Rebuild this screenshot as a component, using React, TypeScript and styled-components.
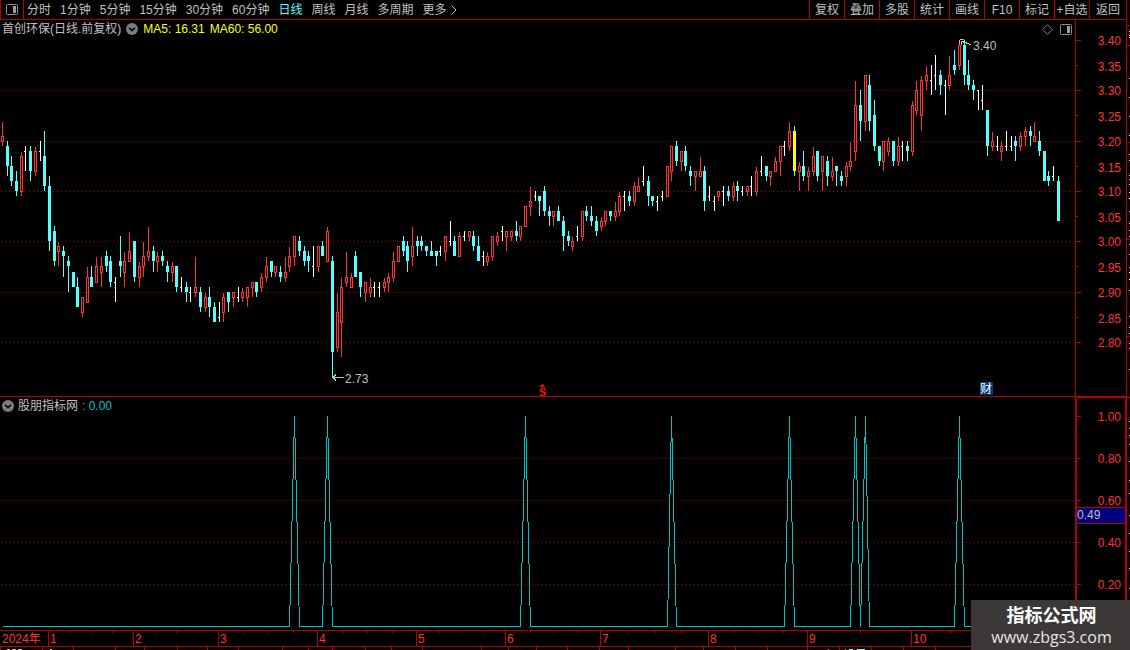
import React from 'react';
import styled, { createGlobalStyle, css } from 'styled-components';

const RED_LINE = '#b40000';
const RED_TEXT = '#ff3232';
const CYAN = '#54ffff';
const TEAL = '#00c0c0';
const GREY = '#c0c0c0';
const SANS = '"Liberation Sans", "Noto Sans CJK SC", sans-serif';

const GlobalStyle = createGlobalStyle`
  * { box-sizing: border-box; }
  html, body { margin: 0; background: #000; }
  body { font: 12px/18px ${SANS}; color: ${GREY}; overflow-x: hidden; }
`;

/* ---------- data ---------- */

// kind + high, body top, body bottom, low in cents.
// R: hollow rise, C: solid fall, W: unchanged, Y: highlighted fall
const RAW = `
R324,321,320,319 C320,319,315,313 C317,315,312,311 C314,312,310,309 R318,317,310,309
W319,318,318,314 C319,318,314,312 R319,318,314,313 W320,318,318,316 C322,317,311,310
C313,311,300,298 C303,302,296,295 R300,299,298,295 C299,298,297,293 C297,296,295,290
C294,294,291,291 C293,291,287,287 R289,289,286,285 R295,293,288,288 C295,293,291,291
R297,295,292,292 R297,295,294,291 C298,297,295,294 C297,296,292,291 W293,292,292,288
C301,296,295,293 R298,296,294,291 R302,298,296,296 C300,300,293,292 R296,295,293,291
R300,297,295,293 R303,298,297,296 C299,298,296,294 R298,297,296,294 C298,297,296,295
C296,295,294,292 R296,295,294,292 C295,295,291,290 W293,291,291,290 C292,291,290,288
W291,290,290,288 R297,291,290,289 C291,290,287,286 R290,289,287,286 C291,289,287,285
C288,287,284,284 W288,285,285,284 R290,289,286,284 C290,290,288,286 R290,290,289,287
W291,289,289,288 R291,290,289,288 R291,291,289,287 R292,292,291,289 C292,292,290,289
R294,293,291,290 R297,295,293,292 C296,296,294,293 R295,295,294,293 C295,294,293,292
R297,294,293,292 R299,297,295,294 R301,301,297,295 C301,300,298,297 C299,298,296,295
C298,297,296,294 W299,295,295,293 R299,299,295,294 C300,299,297,297 R303,302,296,296
C297,296,278,273 R290,286,279,278 R293,291,284,277 R298,293,292,291 R294,293,291,291
C298,297,293,293 C294,294,291,289 R292,292,290,288 R293,291,290,289 W292,291,291,289
W292,291,291,289 R293,292,291,290 R294,293,292,290 R298,296,293,292 R299,299,296,296
C301,300,298,297 C300,299,296,294 R303,299,297,295 C301,300,299,297 C301,300,299,298
C299,299,298,297 C300,298,297,297 C298,298,297,295 W299,298,298,297 R301,301,298,296
W304,300,300,299 C301,300,297,297 R302,301,297,297 W302,301,301,300 R302,302,301,300
C302,301,299,298 C301,299,296,296 W298,297,297,295 R298,297,296,295 R301,301,297,296
R302,301,300,299 W303,302,302,300 R302,302,301,298 R302,302,301,300 C304,302,301,300
R303,303,301,300 R307,307,303,303 R311,308,307,305 W310,309,309,308 C309,309,308,305
C311,310,306,305 C307,306,305,303 R306,306,305,303 C307,306,304,304 C305,304,301,298
C302,301,300,299 R301,300,299,298 W303,301,301,300 R306,306,301,300 C307,306,305,304
C307,305,304,303 C305,304,302,301 R305,304,303,302 R306,306,304,303 C306,306,305,304
R308,306,305,304 R310,309,306,305 W310,309,309,306 C310,309,308,307 R312,311,308,307
R313,311,310,310 W315,312,312,311 C313,312,309,307 C309,309,308,307 W309,308,308,306
W310,309,309,308 R315,315,309,309 R319,319,314,312 C320,319,316,315 R318,318,316,314
C319,318,315,314 C315,314,313,311 R314,314,313,310 R317,314,313,313 C315,314,308,306
W311,309,309,308 W309,308,308,306 R310,310,309,308 W311,310,310,307 C311,310,309,308
R312,311,309,308 C312,311,310,308 W311,310,310,309 R311,311,310,309 W313,311,311,309
R315,314,310,309 W317,314,314,313 C315,315,313,312 R314,314,313,311 R317,316,314,314
R319,319,316,313 W320,319,319,317 R324,322,319,318 Y323,322,314,313 R316,315,314,310
C318,315,313,312 R315,314,313,310 R319,317,314,313 C318,318,313,312 R317,317,314,310
C317,316,313,311 R317,314,313,312 C315,315,314,311 C314,313,312,311 R316,315,313,311
R320,316,315,314 R332,327,318,316 C330,327,324,320 R333,333,324,322 C333,331,324,322
C328,325,319,318 C319,319,316,315 R320,320,316,314 R321,320,318,317 C320,320,316,315
R321,319,316,315 W320,319,319,316 C320,319,318,316 R328,327,318,317 R332,330,326,325
R333,332,325,322 R335,333,332,330 W335,332,332,329 W337,333,333,330 C334,333,331,329
W332,331,331,325 R337,333,331,330 C338,335,334,333 R340,339,335,334 C340,339,333,331
C336,333,331,330 C332,331,330,328 W330,330,330,326 W331,328,328,326 C326,326,319,317
R322,320,319,318 W321,319,319,318 R320,319,318,316 W322,319,319,318 W321,319,319,318
C321,320,319,316 R322,321,319,318 R323,322,321,319 C323,322,321,319 R324,321,320,320
C322,320,318,317 C318,318,312,312 C314,313,312,311 W315,313,313,312 C313,312,304,304`;

type Kind = 'R' | 'C' | 'W' | 'Y';
interface CandleData { kind: Kind; high: number; top: number; bottom: number; low: number }

const CANDLES: CandleData[] = RAW.trim().split(/\s+/).map((item) => {
  const [high, top, bottom, low] = item.slice(1).split(',').map(Number);
  return { kind: item[0] as Kind, high, top, bottom, low };
});

const SIGNALS = [62, 69, 111, 142, 167, 181, 183, 203];

const xAt = (i: number) => Math.floor(2.3 + (i * 1056) / 224);

const PRICE_HEADER = 18;
const PRICE_PLOT = 358;
const priceY = (cents: number) => Math.round(2 + (340 - cents) * 5.033);

const IND_HEADER = 17;
const IND_PLOT = 216;
const indY = (value: number) => 212 - Math.round(value * 210);

const PERIODS = ['分时', '1分钟', '5分钟', '15分钟', '30分钟', '60分钟', '日线', '周线', '月线', '多周期'];
const ACTIONS = ['复权', '叠加', '多股', '统计', '画线', 'F10', '标记', '+自选', '返回'];

const MONTHS = [
  { label: '1', width: 85 }, { label: '2', width: 85 }, { label: '3', width: 99 },
  { label: '4', width: 99 }, { label: '5', width: 89 }, { label: '6', width: 95 },
  { label: '7', width: 108 }, { label: '8', width: 99 }, { label: '9', width: 104 },
  { label: '10', width: 79 },
];

const EDGE_LINES = [25, 45, 142, 239, 336, 397, 418, 437];
const EDGE_MARKS = [31, 35, 37, 78, 97, 116, 135, 154, 160, 175, 179, 184, 192, 198, 211, 223, 230, 236, 244,
  254, 267, 272, 279, 290, 316, 327, 333, 343, 348, 369, 421, 428, 435, 444, 461, 480, 493, 515, 533, 551, 568, 588];
const FOOT_TICKS = [0, 42, 73, 115, 144, 177, 207, 238, 282, 308, 332, 365, 391, 422, 481, 508, 536, 567, 599,
  628, 675, 703, 735, 767, 807, 839, 871, 903, 935];

/* ---------- layout ---------- */

const Page = styled.div`
  position: relative;
  display: flex;
  min-height: 100vh;
  overflow: hidden;
  background: #000;
`;

const Terminal = styled.main`
  display: flex;
  flex: 1;
  flex-direction: column;
  min-width: 0;
  border-right: 1px solid ${RED_LINE};
`;

const Edge = styled.svg`
  flex: none;
  width: 3px;
  height: 650px;
`;

const Toolbar = styled.nav`
  display: flex;
  justify-content: space-between;
  height: 20px;
  border-bottom: 1px solid ${RED_LINE};
`;

const Periods = styled.div`
  display: flex;
  gap: 9px;
`;

const buttonReset = css`
  margin: 0;
  padding: 0;
  border: 0;
  background: none;
  color: ${GREY};
  font: 12px/18px ${SANS};
  white-space: nowrap;
  cursor: pointer;
`;

const LayoutButton = styled.button`
  ${buttonReset}
  display: flex;
  align-items: center;
  justify-content: center;
  width: 24px;
  margin-right: -6px;
  border: solid ${RED_LINE};
  border-width: 0 1px;
`;

const PeriodButton = styled.button<{ $active?: boolean }>`
  ${buttonReset}
  display: flex;
  align-items: center;
  gap: 4px;
  color: ${(p) => (p.$active ? CYAN : GREY)};
`;

const Actions = styled.div`
  display: flex;
`;

const ActionButton = styled.button`
  ${buttonReset}
  width: 35px;
  border-left: 1px solid ${RED_LINE};

  &:last-child { width: 37px; }
`;

const Pane = styled.section`
  display: flex;
`;

const Plot = styled.div<{ $divided?: boolean }>`
  flex: 1;
  min-width: 0;
  border-top: ${(p) => (p.$divided ? `1px solid ${RED_LINE}` : '0')};
`;

const PriceAxis = styled.aside`
  flex: none;
  width: 51px;
  border-left: 1px solid ${RED_LINE};
`;

const IndicatorAxis = styled.aside`
  position: relative;
  flex: none;
  width: 51px;
  border: solid ${RED_LINE};
  border-width: 2px 1px 0 2px;
`;

const PaneHeader = styled.header<{ $height: number; $gap: number }>`
  display: flex;
  align-items: center;
  gap: ${(p) => p.$gap}px;
  height: ${(p) => p.$height}px;
  padding: 0 3px 0 2px;
  white-space: nowrap;
`;

const Title = styled.h1`
  margin: 0;
  font: inherit;
`;

const Reading = styled.span<{ $color: string }>`
  color: ${(p) => p.$color};
`;

const HeaderTools = styled.div`
  display: flex;
  gap: 7px;
  margin-left: auto;
`;

const IconButton = styled.button`
  ${buttonReset}
  display: flex;
`;

const Drawing = styled.svg`
  display: block;
  width: 100%;
`;

const AxisText = styled.text`
  fill: ${RED_TEXT};
  font: 12px ${SANS};
  text-anchor: end;
`;

const Note = styled.text`
  fill: ${GREY};
  font: 12px ${SANS};
`;

const CursorValue = styled.output`
  position: absolute;
  top: 109px;
  left: 0;
  right: 0;
  height: 17px;
  border: solid ${RED_LINE};
  border-width: 1px 0;
  background: #000080;
  line-height: 15px;
`;

const TimeAxis = styled.div`
  display: flex;
  height: 17px;
  border: solid ${RED_LINE};
  border-width: 1px 0;
  color: ${RED_TEXT};
  line-height: 16px;
`;

const Year = styled.span`
  flex: none;
  width: 48px;
  padding-left: 2px;
  white-space: nowrap;
`;

const Month = styled.div<{ $width: number }>`
  position: relative;
  flex: none;
  width: ${(p) => p.$width}px;
  padding-left: 1px;
  border-left: 1px solid ${RED_LINE};
`;

const WeekTicks = styled.div`
  position: absolute;
  inset: 0 0 auto 0;
  display: grid;
  grid-template-columns: repeat(4, 1fr);
  height: 2px;
`;

const WeekTick = styled.i`
  & + & { border-left: 1px solid ${RED_LINE}; }
`;

const Watermark = styled.a`
  position: absolute;
  right: 0;
  bottom: 0;
  display: flex;
  flex-direction: column;
  align-items: center;
  width: 159px;
  height: 50px;
  padding: 1px 0 0 2px;
  background: #3c3838;
  color: #e6e6e6;
  font: 16px/20px "Open Sans", sans-serif;
  text-decoration: none;
`;

const SiteName = styled.strong`
  color: #fff;
  font: bold 18px/26px "Noto Sans CJK SC", sans-serif;
`;

/* ---------- drawings ---------- */

const PanelIcon = () => (
  <svg width="12" height="11" viewBox="0 0 12 11" aria-hidden="true">
    <rect x="0.5" y="0.5" width="11" height="10" rx="1" fill="none" stroke="#8c8c8c" />
    <rect x="7" y="2" width="3" height="7" fill="#a0a0a0" />
  </svg>
);

const DiamondIcon = () => (
  <svg width="11" height="11" viewBox="0 0 11 11" aria-hidden="true">
    <path d="M5.5 .7 10.3 5.5 5.5 10.3 .7 5.5Z" fill="none" stroke="#808080" />
  </svg>
);

const CollapseIcon = () => (
  <svg width="12" height="12" viewBox="0 0 12 12" aria-hidden="true">
    <circle cx="6" cy="6" r="6" fill="#7c7c7c" />
    <path d="M3 4.8 6 7.6 9 4.8" fill="none" stroke="#000" strokeWidth="1.5" />
  </svg>
);

const GridLine = ({ y }: { y: number }) => (
  <line x1="1" x2="100%" y1={y + 0.5} y2={y + 0.5} stroke={RED_LINE} strokeDasharray="1 3" />
);

const Candle = ({ data, x }: { data: CandleData; x: number }) => {
  const { kind } = data;
  const high = priceY(data.high);
  const top = priceY(data.top);
  const bottom = priceY(data.bottom);
  const low = priceY(data.low);
  if (kind === 'W') {
    return (
      <g fill="#fff">
        <rect x={x} y={high} width="1" height={low - high} />
        <rect x={x - 1} y={top} width="1" height="1" />
      </g>
    );
  }
  if (kind === 'R') {
    return (
      <g fill={RED_TEXT}>
        {top > high && <rect x={x} y={high + 1} width="1" height={top - high - 1} />}
        <rect x={x - 0.5} y={top + 0.5} width="2" height={bottom - top} fill="none" stroke={RED_TEXT} />
        {low > bottom && <rect x={x} y={bottom} width="1" height={low - bottom} />}
      </g>
    );
  }
  return (
    <g fill={CYAN}>
      <rect x={x} y={high} width="1" height={low - high} />
      <rect x={x - 1} y={top} width="3" height={bottom - top} fill={kind === 'Y' ? '#ffff00' : CYAN} />
    </g>
  );
};

const PriceChart = () => (
  <Drawing height={PRICE_PLOT} shapeRendering="crispEdges" role="img" aria-label="日线">
    {[330, 320, 310, 300, 290, 280].map((p) => <GridLine key={p} y={priceY(p)} />)}
    {CANDLES.map((c, i) => <Candle key={i} data={c} x={xAt(i)} />)}
    <path
      d="M960 1h4v1h-4zM959 2h1v4h-1zM961 3h3v1h-3zM961 4h1v3h-1zM963 4h4v1h-4zM966 5h3v1h-3zM969 6h2v1h-2z"
      fill={GREY}
    />
    <Note x="973" y="12">3.40</Note>
    <path d="M332 339.500H344M333 339.500 336 336.500M333 339.500 336 342.500" fill="none" stroke={GREY} />
    <Note x="345" y="345">2.73</Note>
    <path
      d="M542 346h1v1h1v1h1v1h-5v-1h1v-1h1zM541 350h4v1h1v1h-2v-1h-2v2h2v1h2v3h-1v1h-5v-2h2v1h2v-2h-2v-1h-2v-3h1z"
      fill="#ff0000"
    />
    <rect x="980" y="344" width="13" height="13" fill="#003c78" />
    <text x="980" y="355" fill="#fff" fontSize="12" fontFamily={SANS}>财</text>
  </Drawing>
);

const PriceScale = () => (
  <Drawing height={PRICE_HEADER + PRICE_PLOT} shapeRendering="crispEdges">
    {Array.from({ length: 13 }, (_, i) => 340 - i * 5).map((p) => {
      const y = PRICE_HEADER + priceY(p);
      return (
        <g key={p}>
          <rect x="0" y={y} width={p % 10 ? 2 : 5} height="1" fill={RED_LINE} />
          <AxisText x="45" y={y + (p % 10 ? 6 : 5)}>{(p / 100).toFixed(2)}</AxisText>
        </g>
      );
    })}
  </Drawing>
);

const IndicatorChart = () => {
  const points = CANDLES
    .map((_, i) => `${xAt(i) + 0.5},${indY(SIGNALS.includes(i) ? 1 : 0) + 0.5}`)
    .join(' ');
  return (
    <Drawing height={IND_PLOT} shapeRendering="crispEdges" role="img" aria-label="股朋指标网">
      {[0.8, 0.6, 0.4, 0.2].map((v) => <GridLine key={v} y={indY(v)} />)}
      <polyline points={points} fill="none" stroke={TEAL} strokeLinejoin="bevel" />
    </Drawing>
  );
};

const IndicatorScale = () => (
  <Drawing height={IND_HEADER + IND_PLOT - 1} shapeRendering="crispEdges">
    {Array.from({ length: 9 }, (_, i) => 10 - i).map((v) => {
      const y = IND_HEADER - 1 + indY(v / 10);
      return (
        <g key={v}>
          <rect x="0" y={y} width={v % 2 ? 1 : 4} height="1" fill={RED_LINE} />
          {v % 2 === 0 && <AxisText x="44" y={y + 5}>{(v / 10).toFixed(2)}</AxisText>}
        </g>
      );
    })}
  </Drawing>
);

export default function App() {
  return (
    <>
      <GlobalStyle />
      <Page>
        <Terminal>
          <Toolbar>
            <Periods>
              <LayoutButton aria-label="布局"><PanelIcon /></LayoutButton>
              {PERIODS.map((p) => <PeriodButton key={p} $active={p === '日线'}>{p}</PeriodButton>)}
              <PeriodButton>
                更多
                <svg width="6" height="10" viewBox="0 0 6 10" aria-hidden="true">
                  <path d="M.7 .7 5 5 .7 9.300" fill="none" stroke={GREY} />
                </svg>
              </PeriodButton>
            </Periods>
            <Actions>
              {ACTIONS.map((a) => <ActionButton key={a}>{a}</ActionButton>)}
            </Actions>
          </Toolbar>

          <Pane>
            <Plot>
              <PaneHeader $height={PRICE_HEADER} $gap={5}>
                <Title>首创环保(日线.前复权)</Title>
                <IconButton aria-label="收起"><CollapseIcon /></IconButton>
                <Reading $color="#ffff00">MA5: 16.31</Reading>
                <Reading $color="#ffff00">MA60: 56.00</Reading>
                <HeaderTools>
                  <IconButton aria-label="标记"><DiamondIcon /></IconButton>
                  <IconButton aria-label="侧栏"><PanelIcon /></IconButton>
                </HeaderTools>
              </PaneHeader>
              <PriceChart />
            </Plot>
            <PriceAxis><PriceScale /></PriceAxis>
          </Pane>

          <Pane>
            <Plot $divided>
              <PaneHeader $height={IND_HEADER} $gap={4}>
                <IconButton aria-label="收起"><CollapseIcon /></IconButton>
                <span>股朋指标网</span>
                <Reading $color={TEAL}>: 0.00</Reading>
              </PaneHeader>
              <IndicatorChart />
            </Plot>
            <IndicatorAxis>
              <IndicatorScale />
              <CursorValue>0.49</CursorValue>
            </IndicatorAxis>
          </Pane>

          <TimeAxis>
            <Year>2024年</Year>
            {MONTHS.map((m) => (
              <Month key={m.label} $width={m.width}>
                <WeekTicks><WeekTick /><WeekTick /><WeekTick /><WeekTick /></WeekTicks>
                {m.label}
              </Month>
            ))}
          </TimeAxis>

          <Drawing height="3" shapeRendering="crispEdges" aria-hidden="true">
            {FOOT_TICKS.map((x) => <rect key={x} x={x} y="0" width="1" height="3" fill={RED_LINE} />)}
            <path d="M7 2h3v1h-3zM12 2h4v1h-4zM18 2h4v1h-4zM50 2h2v1h-2zM828 2h1v1h-1zM845 2h1v1h-1z" fill={GREY} />
            <path d="M849 2h4v1h-4zM857 2h8v1h-8z" fill={CYAN} />
          </Drawing>
        </Terminal>

        <Edge shapeRendering="crispEdges" aria-hidden="true">
          {EDGE_LINES.map((y) => <rect key={y} x="0" y={y} width="3" height="1" fill={RED_LINE} />)}
          {EDGE_MARKS.map((y) => <rect key={y} x="2" y={y} width="1" height="1" fill="#fff" />)}
        </Edge>

        <Watermark href="http://www.zbgs3.com">
          <SiteName>指标公式网</SiteName>
          <span>www.zbgs3.com</span>
        </Watermark>
      </Page>
    </>
  );
}
